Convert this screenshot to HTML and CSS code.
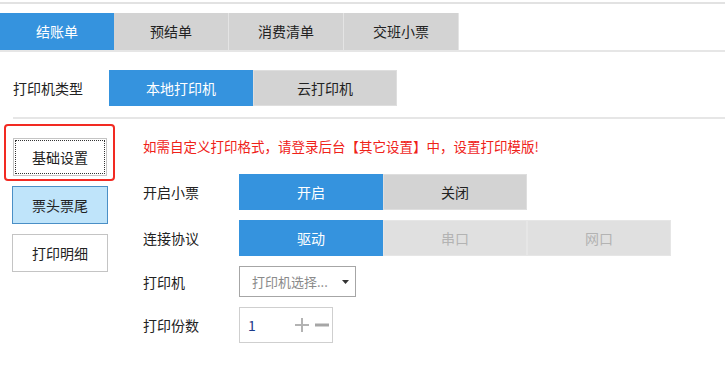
FILE: index.html
```html
<!DOCTYPE html>
<html>
<head>
    <title>打印设置</title>
    <meta charset=utf-8>
    <link rel="stylesheet" href="styles.css">
</head>
<body>
    <div class="topline"></div>
    <div class="tabs">
        <div class="tab on">结账单</div>
        <div class="tab">预结单</div>
        <div class="tab">消费清单</div>
        <div class="tab">交班小票</div>
    </div>
    <div class="type-row">
        <div class="label">打印机类型</div>
        <div class="seg on">本地打印机</div>
        <div class="seg">云打印机</div>
    </div>
    <div class="sep"></div>
    <div class="main">
        <div class="side">
            <div class="mark">
                <div class="side-btn focus">基础设置</div>
            </div>
            <div class="side-btn active">票头票尾</div>
            <div class="side-btn gap">打印明细</div>
        </div>
        <div class="content">
            <div class="tip">如需自定义打印格式，请登录后台【其它设置】中，设置打印模版!</div>
            <div class="row first">
                <div class="label">开启小票</div>
                <div class="seg on">开启</div>
                <div class="seg">关闭</div>
            </div>
            <div class="row">
                <div class="label">连接协议</div>
                <div class="seg on">驱动</div>
                <div class="seg off">串口</div>
                <div class="seg off">网口</div>
            </div>
            <div class="row">
                <div class="label">打印机</div>
                <div class="select">
                    <span>打印机选择...</span>
                    <svg width="7" height="4" viewBox="0 0 7 4"><path d="M0 0h7L3.5 4z" fill="#333"/></svg>
                </div>
            </div>
            <div class="row">
                <div class="label">打印份数</div>
                <div class="num">
                    <span class="val">1</span>
                    <svg width="14" height="14" viewBox="0 0 14 14"><path d="M0 7h14M7 0v14" stroke="#b3b3b3" stroke-width="2"/></svg>
                    <svg width="14" height="14" viewBox="0 0 14 14"><path d="M0 7h14" stroke="#a6a6a6" stroke-width="3"/></svg>
                </div>
            </div>
        </div>
    </div>
</body>
</html>
```

FILE: styles.css
```css
body{
    margin: 0;
    font-family: "Noto Sans CJK SC", "Noto Sans", sans-serif;
    font-size: 14px;
    color: #222;
    background: #fff;
}
.topline{
    margin-top: 2px;
    border-top: 2px solid #e2e2e2;
}
.tabs{
    display: flex;
    margin-top: 9px;
    border-bottom: 2px solid #e6e6e6;
}
.tab{
    width: 114px;
    height: 37px;
    line-height: 37px;
    text-align: center;
    background: #d3d3d3;
    border-right: 1px solid #e4e4e4;
}
.tab.on{
    background: #3593de;
    color: #fff;
    border-right: none;
}
.type-row{
    display: flex;
    align-items: center;
    margin-top: 18px;
    padding-left: 13px;
}
.label{
    width: 96px;
    flex-shrink: 0;
}
.seg{
    width: 142px;
    height: 34px;
    line-height: 34px;
    text-align: center;
    background: #d3d3d3;
    border: 1px solid #dedede;
}
.seg.on{
    background: #3593de;
    border-color: #3593de;
    color: #fff;
}
.seg.off{
    background: #e0e0e0;
    border-color: #e6e6e6;
    color: #b3b3b3;
}
.sep{
    margin: 11px 0 0 13px;
    border-top: 2px solid #e6e6e6;
}
.main{
    display: flex;
    margin-top: 5px;
}
.side{
    width: 96px;
    padding-left: 12px;
    flex-shrink: 0;
}
.mark{
    width: 94px;
    margin-left: -8px;
    padding: 12px 6px 3px 7px;
    border: 2px solid #f22a22;
    border-radius: 4px;
}
.side-btn{
    height: 36px;
    line-height: 36px;
    text-align: center;
    border: 1px solid #c4c4c4;
    background: #fff;
}
.side-btn.focus{
    outline: 1px dotted #333;
    outline-offset: -3px;
}
.side-btn.active{
    margin-top: 5px;
    background: #bfe4fa;
    border-color: #4a8fc6;
}
.side-btn.gap{
    margin-top: 10px;
}
.content{
    margin-left: 35px;
    padding-top: 12px;
}
.tip{
    color: #ef2219;
    font-size: 13.5px;
    line-height: 20px;
}
.row{
    display: flex;
    align-items: center;
    margin-top: 10px;
}
.row.first{
    margin-top: 18px;
}
.select{
    width: 97px;
    height: 29px;
    padding: 0 6px 0 12px;
    border: 1px solid #a6a6a6;
    display: flex;
    align-items: center;
    justify-content: space-between;
    color: #8a8a8a;
    font-size: 13px;
}
.num{
    width: 81px;
    height: 34px;
    padding: 0 3px 0 8px;
    border: 1px solid #cfcfcf;
    display: flex;
    align-items: center;
    gap: 6px;
}
.num .val{
    color: #1c3a8a;
    flex: 1;
}
```
